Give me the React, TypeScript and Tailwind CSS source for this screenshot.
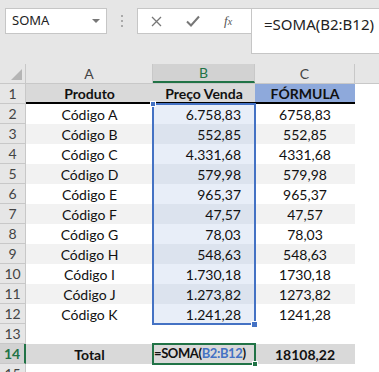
const rows = [
  { n: 2, p: "Código A", v: "6.758,83", f: "6758,83" },
  { n: 3, p: "Código B", v: "552,85", f: "552,85" },
  { n: 4, p: "Código C", v: "4.331,68", f: "4331,68" },
  { n: 5, p: "Código D", v: "579,98", f: "579,98" },
  { n: 6, p: "Código E", v: "965,37", f: "965,37" },
  { n: 7, p: "Código F", v: "47,57", f: "47,57" },
  { n: 8, p: "Código G", v: "78,03", f: "78,03" },
  { n: 9, p: "Código H", v: "548,63", f: "548,63" },
  { n: 10, p: "Código I", v: "1.730,18", f: "1730,18" },
  { n: 11, p: "Código J", v: "1.273,82", f: "1273,82" },
  { n: 12, p: "Código K", v: "1.241,28", f: "1241,28" },
];

const cellFont = { fontFamily: "Lato, 'Open Sans', sans-serif" };

function RowNum({ n, active }: { n: number; active?: boolean }) {
  return (
    <div
      className={
        "w-[26px] h-[20px] flex items-center justify-center text-[14px] border-b border-r border-[#c8c8c8] " +
        (active ? "bg-[#d2d2d2] text-[#217346] border-r-2 border-r-[#217346]" : "bg-[#e6e6e6] text-[#444]")
      }
    >
      {n}
    </div>
  );
}

export default function App() {
  return (
    <div className="w-[379px] h-[372px] overflow-hidden bg-white text-[#111]" style={cellFont}>
      {/* formula bar */}
      <div className="h-[64px] bg-[#e6e6e6] flex items-start pt-[8px] pl-[5px]" style={{ fontFamily: "'Noto Sans', 'Open Sans', sans-serif" }}>
        <div className="w-[102px] h-[26px] bg-white border border-[#c6c6c6] flex items-center justify-between pl-[6px] pr-[6px] text-[13px] text-[#222]">
          <span>SOMA</span>
          <svg width="8" height="5" viewBox="0 0 8 5"><path d="M0 0h8L4 4z" fill="#777" /></svg>
        </div>
        <div className="w-[30px] h-[26px] flex flex-col items-center justify-center gap-[3px]">
          <span className="w-[2px] h-[2px] bg-[#aaa]" />
          <span className="w-[2px] h-[2px] bg-[#aaa]" />
          <span className="w-[2px] h-[2px] bg-[#aaa]" />
        </div>
        <div className="w-[114px] h-[26px] bg-white border border-[#c6c6c6] border-r-0 flex items-center">
          <svg className="ml-[13px]" width="11" height="11" viewBox="0 0 11 11">
            <path d="M1 1L10 10M10 1L1 10" stroke="#777" strokeWidth="1.3" />
          </svg>
          <svg className="ml-[24px]" width="14" height="12" viewBox="0 0 14 12">
            <path d="M1 6.5L5 10.5L13 1.5" stroke="#777" strokeWidth="2" fill="none" />
          </svg>
          <span className="ml-[24px] italic text-[13px] text-[#555]" style={{ fontFamily: "'Liberation Serif', serif" }}>
            f<span className="text-[10px]">x</span>
          </span>
        </div>
        <div className="flex-1 h-[46px] bg-white border border-[#c6c6c6] border-r-0 pl-[12px] pt-[4px] text-[15px] text-[#222]">
          =SOMA(B2:B12)
        </div>
      </div>

      {/* grid */}
      <div className="relative">
        {/* column headers */}
        <div className="flex h-[20px] bg-[#e6e6e6] border-b border-[#c8c8c8] text-[14px] text-[#444]">
          <div className="w-[26px] border-r border-[#c8c8c8] relative">
            <svg className="absolute right-[3px] bottom-[3px]" width="11" height="11" viewBox="0 0 11 11">
              <path d="M11 0V11H0z" fill="#b5b5b5" />
            </svg>
          </div>
          <div className="w-[127px] border-r border-[#c8c8c8] flex items-center justify-center">A</div>
          <div className="w-[102px] border-r border-[#c8c8c8] bg-[#d2d2d2] text-[#217346] border-b-2 border-b-[#217346] flex items-center justify-center">B</div>
          <div className="w-[100px] border-r border-[#c8c8c8] flex items-center justify-center">C</div>
          <div className="flex-1" />
        </div>

        {/* row 1 */}
        <div className="flex h-[20px]">
          <RowNum n={1} />
          <div className="w-[329px] flex border-b-2 border-black font-bold text-[14px]">
            <div className="w-[127px] bg-[#d9d9d9] flex items-center justify-center">Produto</div>
            <div className="w-[102px] bg-[#d9d9d9] flex items-center justify-center">Preço Venda</div>
            <div className="w-[100px] bg-[#8ea9db] flex items-center justify-center">FÓRMULA</div>
          </div>
        </div>

        {rows.map((r) => {
          const odd = r.n % 2 === 1;
          return (
            <div key={r.n} className="flex h-[20px] text-[14px]">
              <RowNum n={r.n} />
              <div className={"w-[127px] flex items-center justify-center " + (odd ? "bg-[#f2f2f2]" : "bg-white")}>{r.p}</div>
              <div className={"w-[102px] flex items-center justify-end pr-[14px] " + (odd ? "bg-[#dce3ee]" : "bg-[#e8eef8]")}>{r.v}</div>
              <div className={"w-[100px] flex items-center justify-center " + (odd ? "bg-[#f2f2f2]" : "bg-white")}>{r.f}</div>
            </div>
          );
        })}

        {/* row 13 */}
        <div className="flex h-[20px]">
          <RowNum n={13} />
        </div>

        {/* row 14 */}
        <div className="flex h-[20px] text-[14px] font-bold">
          <RowNum n={14} active />
          <div className="w-[127px] bg-[#d9d9d9] flex items-center justify-center">Total</div>
          <div className="w-[102px] bg-[#d9d9d9] flex items-center pl-[1px] text-[13px] tracking-[-0.4px] whitespace-nowrap overflow-hidden">
            =SOMA(<span className="text-[#4472c4]">B2:B12</span>)
          </div>
          <div className="w-[100px] bg-[#d9d9d9] flex items-center justify-center">18108,22</div>
        </div>

        <div className="flex h-[20px]">
          <RowNum n={15} />
        </div>

        {/* selection range B2:B12 */}
        <div className="absolute left-[152px] top-[39px] w-[104px] h-[222px] border-2 border-[#4472c4] pointer-events-none" />
        <div className="absolute left-[150px] top-[37px] w-[6px] h-[6px] bg-[#4472c4] border border-white" />
        <div className="absolute left-[251px] top-[257px] w-[7px] h-[7px] bg-[#4472c4] border border-white" />

        {/* active cell B14 */}
        <div className="absolute left-[152px] top-[279px] w-[104px] h-[22px] border-2 border-[#217346] pointer-events-none" />
        <div className="absolute left-[252px] top-[297px] w-[6px] h-[6px] bg-[#217346] border border-white" />
      </div>
    </div>
  );
}
